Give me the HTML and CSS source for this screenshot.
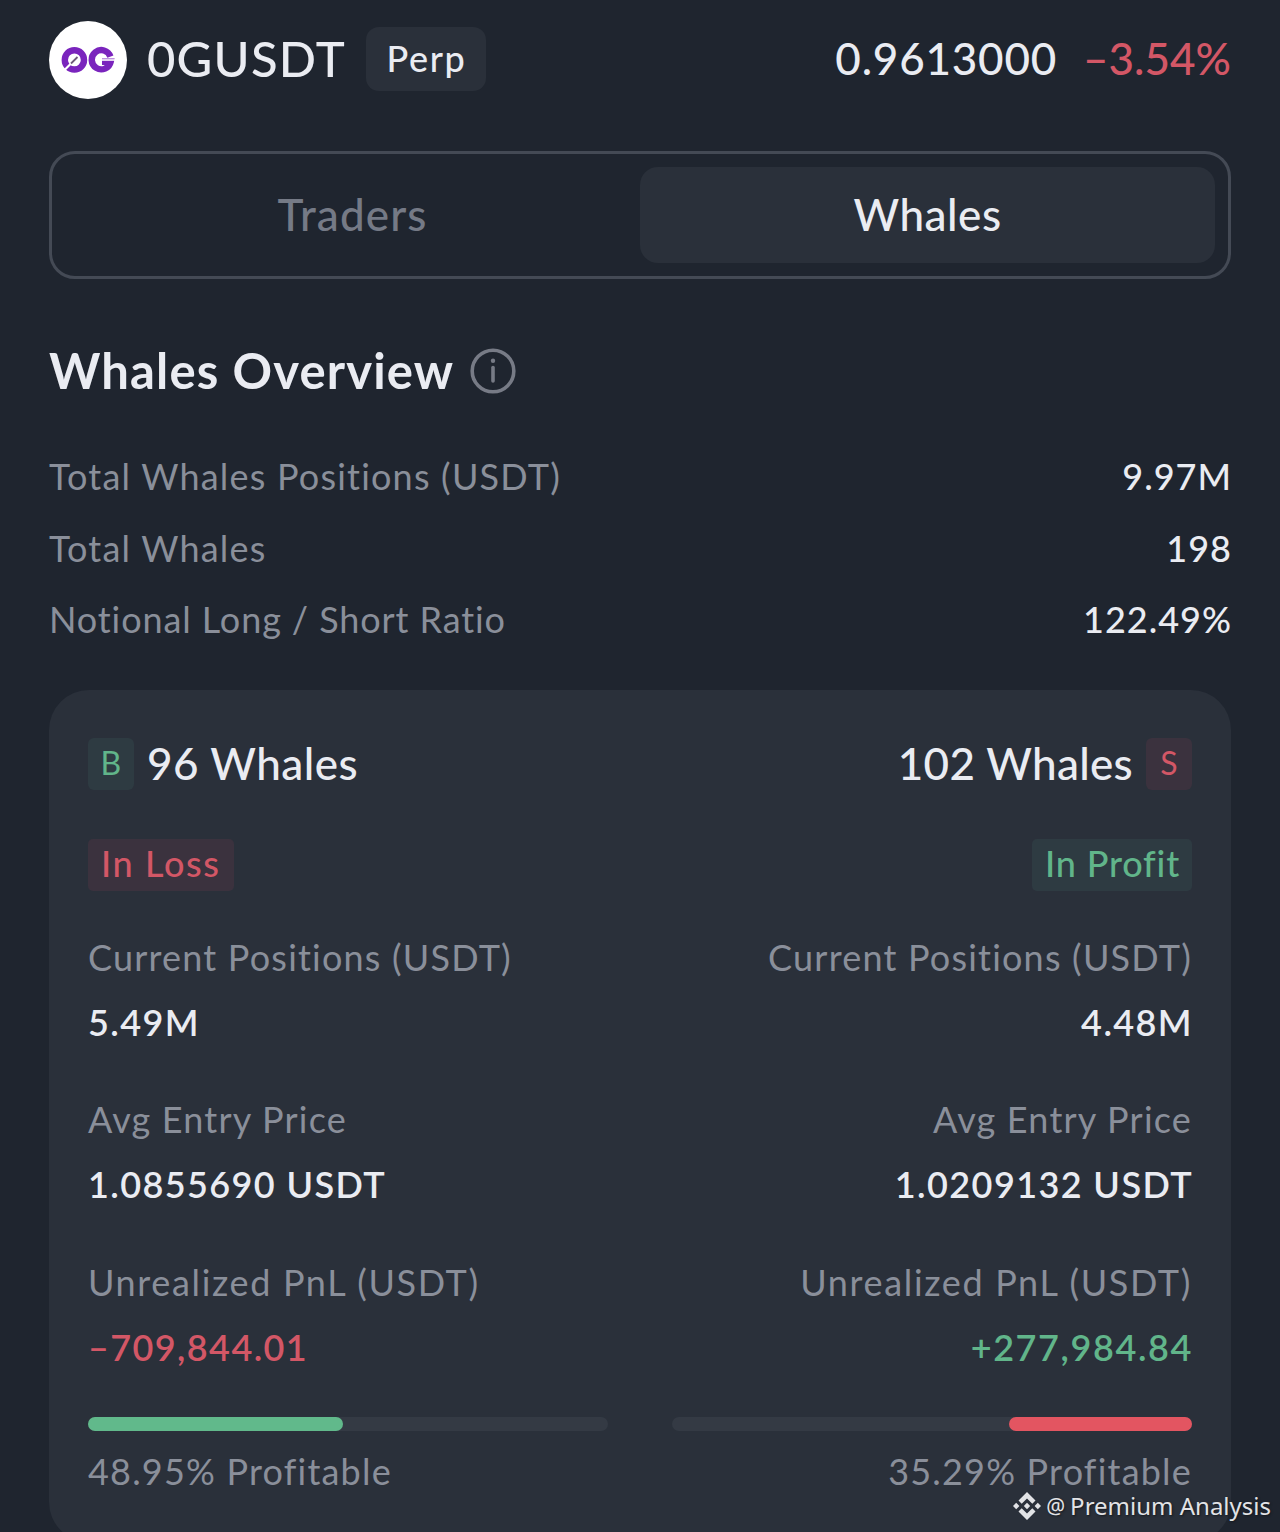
FILE: index.html
```html
<!DOCTYPE html>
<html lang="en">
<head>
	<meta charset="utf-8"/>
	<title>0GUSDT Whales</title>
	<link rel="stylesheet" href="styles.css">
</head>
<body>
	<header class="header">
		<svg class="coin" viewBox="0 0 78 78">
			<circle cx="39" cy="39" r="39" fill="#fff"/>
			<g fill="none" stroke="#7a24bd" stroke-width="6.4">
				<circle cx="25.4" cy="38.9" r="9.6"/>
				<path d="M61.400 35.600A9.600 9.600 0 1 0 61.700 40.800H53"/>
			</g>
			<path d="M15 49.500L22 42.500" stroke="#fff" stroke-width="2.200"/>
			<path d="M22 42.500L28.500 36" stroke="#6d5a78" stroke-width="1.800"/>
			<path d="M52 39H67" stroke="#fff" stroke-width="1.600"/>
		</svg>
		<h1 class="symbol">0GUSDT</h1>
		<span class="perp">Perp</span>
		<span class="price">0.9613000</span>
		<span class="change red">&#8211;3.54%</span>
	</header>

	<div class="tabs">
		<div class="tab">Traders</div>
		<div class="tab active">Whales</div>
	</div>

	<h2 class="title">
		Whales Overview
		<svg class="info" viewBox="0 0 46 46">
			<circle cx="23" cy="23" r="20.800" fill="none" stroke="#777b86" stroke-width="3.600"/>
			<circle cx="23" cy="12.800" r="2.200" fill="#777b86"/>
			<path d="M23 19.500V33" stroke="#777b86" stroke-width="3.600" stroke-linecap="round"/>
		</svg>
	</h2>

	<div class="stats">
		<div class="stat"><span class="label">Total Whales Positions (USDT)</span><span class="num">9.97M</span></div>
		<div class="stat"><span class="label">Total Whales</span><span class="num">198</span></div>
		<div class="stat"><span class="label tight">Notional Long / Short Ratio</span><span class="num">122.49%</span></div>
	</div>

	<div class="card">
		<div class="side">
			<div class="count"><span class="badge buy">B</span>96 Whales</div>
			<div class="tag loss">In Loss</div>
			<div class="label">Current Positions (USDT)</div>
			<div class="value">5.49M</div>
			<div class="label">Avg Entry Price</div>
			<div class="value">1.0855690 USDT</div>
			<div class="label wide">Unrealized PnL (USDT)</div>
			<div class="value red">&#8211;709,844.01</div>
			<div class="bar"><div class="fill long" style="width: 48.95%"></div></div>
			<div class="label">48.95% Profitable</div>
		</div>
		<div class="side right">
			<div class="count">102 Whales<span class="badge sell">S</span></div>
			<div class="tag profit">In Profit</div>
			<div class="label">Current Positions (USDT)</div>
			<div class="value">4.48M</div>
			<div class="label">Avg Entry Price</div>
			<div class="value">1.0209132 USDT</div>
			<div class="label wide">Unrealized PnL (USDT)</div>
			<div class="value green gain">+277,984.84</div>
			<div class="bar"><div class="fill short" style="width: 35.29%"></div></div>
			<div class="label">35.29% Profitable</div>
		</div>
	</div>

	<div class="watermark">
		<svg class="logo" viewBox="0 0 28 28" fill="#e2e3e6">
			<path d="M14 0L22.500 8.500L19.300 11.700L14 6.400L8.700 11.700L5.500 8.500Z"/>
			<path d="M14 28L22.500 19.500L19.300 16.300L14 21.600L8.700 16.300L5.500 19.500Z"/>
			<path d="M14 10.800L17.200 14L14 17.200L10.800 14Z"/>
			<path d="M3.200 10.800L6.400 14L3.200 17.200L0 14Z"/>
			<path d="M24.800 10.800L28 14L24.800 17.200L21.600 14Z"/>
		</svg>
		<span class="at">@</span>
		<span>Premium Analysis</span>
	</div>
</body>
</html>
```

FILE: styles.css
```css
* {
	box-sizing: border-box;
}
body {
	margin: 0;
	padding: 21px 49px 0;
	height: 1532px;
	overflow: hidden;
	position: relative;
	background: #1f252f;
	color: #eaecf2;
	font-family: Lato, "Liberation Sans", sans-serif;
	font-size: 36px;
	font-weight: 500;
}
.header {
	display: flex;
	height: 78px;
	line-height: 74px;
}
.coin {
	width: 78px;
	height: 78px;
	margin-right: 20px;
}
.symbol {
	margin: 0;
	font-size: 49px;
	font-weight: 500;
	letter-spacing: 1.2px;
	line-height: 75px;
}
.perp {
	width: 120px;
	height: 64px;
	margin: 6px 0 0 20px;
	padding-left: 1px;
	border-radius: 13px;
	background: #2a303a;
	letter-spacing: 1.6px;
	line-height: 62px;
	text-align: center;
}
.price {
	margin-left: auto;
	font-size: 44px;
	letter-spacing: 0.8px;
}
.change {
	margin-left: 26px;
	font-size: 44px;
}
.red {
	color: #d35766;
}
.green {
	color: #61b58a;
}
.tabs {
	display: flex;
	height: 128px;
	margin-top: 52px;
	padding: 13px;
	border: 3px solid #444a55;
	border-radius: 26px;
}
.tab {
	flex: 1;
	border-radius: 18px;
	color: #757a86;
	font-size: 44px;
	letter-spacing: 1.1px;
	line-height: 95px;
	text-align: center;
}
.active {
	background: #2a303a;
	color: #eaecf2;
	letter-spacing: 0.5px;
}
.title {
	display: flex;
	align-items: center;
	height: 60px;
	margin: 61px 0 0;
	font-size: 49px;
	font-weight: 700;
	letter-spacing: 1.15px;
}
.info {
	width: 46px;
	height: 46px;
	margin: 2px 0 0 16px;
}
.stats {
	margin-top: 41px;
}
.stat {
	display: flex;
	justify-content: space-between;
	height: 71.6px;
	line-height: 71.6px;
}
.num {
	margin-right: -1px;
	letter-spacing: 1px;
}
.label {
	color: #8a8f9a;
	font-weight: 400;
	letter-spacing: 1.2px;
}
.tight {
	letter-spacing: 0.9px;
}
.wide {
	letter-spacing: 1.65px;
}
.card {
	display: flex;
	gap: 64px;
	height: 852px;
	margin-top: 34px;
	padding: 48px 39px 0;
	border-radius: 40px;
	background: #2a303a;
}
.side {
	display: flex;
	flex-direction: column;
	align-items: flex-start;
	width: 520px;
}
.side > div {
	flex-shrink: 0;
}
.right {
	align-items: flex-end;
}
.right .value {
	margin-right: -1px;
}
.count {
	display: flex;
	gap: 13px;
	height: 52px;
	font-size: 44px;
	letter-spacing: 0.5px;
	line-height: 50px;
}
.right .count {
	letter-spacing: 0.3px;
}
.badge {
	width: 46px;
	height: 52px;
	border-radius: 6px;
	font-size: 32px;
	font-weight: 400;
	text-align: center;
}
.tag {
	height: 52px;
	margin: 49px 0 34px;
	padding: 0 13px;
	border-radius: 5px;
	letter-spacing: 1.6px;
	line-height: 49px;
}
.profit {
	padding-right: 12px;
	letter-spacing: 0.8px;
}
.buy, .profit {
	background: #2e3b42;
	color: #61b58a;
}
.sell, .loss {
	background: #3b323e;
	color: #d35766;
}
.side .label {
	height: 65px;
	line-height: 65px;
}
.value {
	height: 65px;
	margin-bottom: 32.5px;
	font-weight: 600;
	letter-spacing: 1.4px;
	line-height: 65px;
}
.gain {
	letter-spacing: 1.6px;
}
.bar {
	display: flex;
	width: 100%;
	height: 14px;
	margin: 4.5px 0 8px;
	border-radius: 7px;
	background: #343a44;
}
.right .bar {
	justify-content: flex-end;
}
.fill {
	border-radius: 7px;
}
.long {
	background: #61b98b;
}
.short {
	background: #e35561;
}
.watermark {
	position: absolute;
	right: 9px;
	bottom: 9px;
	display: flex;
	align-items: center;
	gap: 5px;
	color: #e2e3e6;
	font: 24px/34px "Noto Sans", sans-serif;
	text-shadow: 1px 1px 2px #15191f;
}
.at {
	font-size: 21px;
}
.logo {
	width: 28px;
	height: 28px;
}
```
